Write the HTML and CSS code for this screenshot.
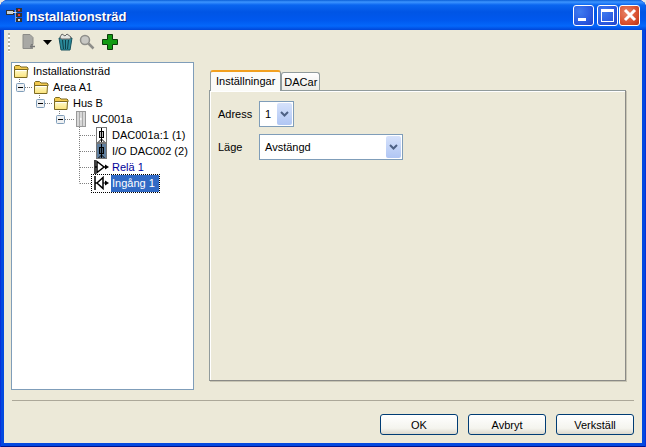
FILE: index.html
```html
<!DOCTYPE html>
<html lang="sv">
<head>
    <meta charset="UTF-8">
    <meta name="viewport" content="width=device-width, initial-scale=1.0">
    <title>Installationsträd</title>
    <link rel="stylesheet" href="styles.css">
</head>
<body>
    <svg class="defs" width="0" height="0">
        <defs>
            <linearGradient id="flap" x1="0" y1="0" x2="0" y2="1">
                <stop offset="0" stop-color="#fffbd0"/>
                <stop offset="1" stop-color="#fbe37a"/>
            </linearGradient>
        </defs>
        <symbol id="folder" viewBox="0 0 16 16">
            <path d="M1.500 13.500V3.500l1-1h4l1.500 1.500h6l1 1v2h-12z" fill="#f2c94e" stroke="#7c6a22"/>
            <path d="M1.500 14.500V6.500h13l-.5 8z" fill="url(#flap)" stroke="#7c6a22"/>
            <path d="M3 7.500h10.500" stroke="#fff" fill="none"/>
        </symbol>
        <symbol id="dac" viewBox="0 0 11 16">
            <path d="M5.500 1v3M5.500 10v2M5.500 12l-3 3M5.500 12l3 3M5.500 12v3" stroke="#000" fill="none"/>
            <rect x="3.500" y="4.500" width="4" height="6" fill="none" stroke="#000"/>
            <path d="M5.500 5v5" stroke="#000" stroke-width="1.500"/>
        </symbol>
        <symbol id="box" viewBox="0 0 9 9">
            <rect x="0.500" y="0.500" width="8" height="8" rx="1" fill="#eef0f2" stroke="#7f9db9"/>
            <path d="M2 4.500h5" stroke="#000"/>
        </symbol>
    </svg>

    <div class="window">
        <div class="titlebar">
            <svg class="title-icon" width="16" height="16" viewBox="0 0 16 16">
                <rect x="0.500" y="2.500" width="7" height="4" fill="#c8d0d8" stroke="#333"/>
                <path d="M7 4.500h3M10 2v12" stroke="#e8e8e8" fill="none"/>
                <rect x="10" y="0" width="6" height="4" fill="#333"/>
                <rect x="12" y="1" width="2" height="2" fill="#e33"/>
                <rect x="10" y="5" width="6" height="4" fill="#333"/>
                <rect x="12" y="6" width="2" height="2" fill="#e33"/>
                <rect x="10" y="10" width="6" height="4" fill="#333"/>
                <rect x="12" y="11" width="2" height="2" fill="#ddd"/>
            </svg>
            <span class="title-text">Installationsträd</span>
            <div class="title-buttons">
                <div class="tbtn tbtn-min"><span class="min-bar"></span></div>
                <div class="tbtn tbtn-max"><span class="max-box"></span></div>
                <div class="tbtn tbtn-close">
                    <svg width="14" height="14" viewBox="0 0 14 14"><path d="M2 2l10 10M12 2L2 12" stroke="#fff" stroke-width="3"/></svg>
                </div>
            </div>
        </div>

        <div class="content">
            <div class="toolbar">
                <div class="gripper"></div>
                <svg class="tool tool-doc" width="14" height="16" viewBox="0 0 14 16">
                    <path d="M1 .5h7l3 3v7H9v4H1z" fill="#a8a8a4" stroke="#8c8c88"/>
                    <path d="M10 10v5M8 12.500h5" stroke="#777" stroke-width="1.500"/>
                </svg>
                <svg class="tool tool-arrow" width="9" height="5" viewBox="0 0 9 5"><path d="M0 0h9L4.500 5z" fill="#000"/></svg>
                <svg class="tool tool-trash" width="15" height="18" viewBox="0 0 15 18">
                    <path d="M1 5h13l-2 12H3z" fill="#2a8a9a" stroke="#16505c"/>
                    <path d="M4.500 7l1 9M7.500 7v9M10.500 7l-1 9" stroke="#0f3f49"/>
                    <path d="M2 4l2-3 3 2 2-2 4 3-1 2H3z" fill="#e4e4e0" stroke="#666"/>
                </svg>
                <svg class="tool tool-lens" width="16" height="16" viewBox="0 0 16 16">
                    <circle cx="6" cy="6" r="4.500" fill="#c8c8c4" stroke="#8e8e8a" stroke-width="1.500"/>
                    <path d="M9.500 9.500l5 5" stroke="#8e8e8a" stroke-width="2.500"/>
                </svg>
                <svg class="tool tool-plus" width="16" height="16" viewBox="0 0 16 16">
                    <path d="M5.500.5h5v5h5v5h-5v5h-5v-5h-5v-5h5z" fill="#129a12" stroke="#0a3c0a"/>
                </svg>
            </div>

            <div class="main">
                <div class="tree">
                    <!-- dotted connector lines between the nodes -->
                    <svg class="tree-lines" width="100" height="130">
                        <path d="M7.500 16v4M13 24.500h8M27.500 32v4M33 40.500h8M47.500 48v4M53 56.500h10M67.500 64v56.500M68 72.500h16M68 88.500h16M68 104.500h14M68 120.500h12" stroke="#808080" stroke-dasharray="1 1" fill="none"/>
                    </svg>
                    <div class="node">
                        <svg class="node-icon" width="16" height="16"><use href="#folder"/></svg>
                        <span class="node-label">Installationsträd</span>
                    </div>
                    <div class="node level-1">
                        <svg class="expander" width="9" height="9"><use href="#box"/></svg>
                        <svg class="node-icon" width="16" height="16"><use href="#folder"/></svg>
                        <span class="node-label">Area A1</span>
                    </div>
                    <div class="node level-2">
                        <svg class="expander" width="9" height="9"><use href="#box"/></svg>
                        <svg class="node-icon" width="16" height="16"><use href="#folder"/></svg>
                        <span class="node-label">Hus B</span>
                    </div>
                    <div class="node level-3">
                        <svg class="expander expander-wide" width="9" height="9"><use href="#box"/></svg>
                        <svg class="node-icon unit" width="12" height="16" viewBox="0 0 12 16">
                            <rect x="1.500" y="0.500" width="9" height="15" fill="#d8d8d8" stroke="#999"/>
                            <path d="M4.500 1v14M7.500 1v14" stroke="#aaa"/>
                            <path d="M5 7l1.500 1L5 9" stroke="#fff" fill="none"/>
                        </svg>
                        <span class="node-label">UC001a</span>
                    </div>
                    <div class="node level-4">
                        <svg class="dac-icon" width="11" height="16"><rect x="0.500" y="0.500" width="10" height="15" fill="#fff" stroke="#777"/><use href="#dac"/></svg>
                        <span class="node-label">DAC001a:1 (1)</span>
                    </div>
                    <div class="node level-4">
                        <svg class="dac-icon" width="11" height="16"><rect x="0.500" y="0.500" width="10" height="15" fill="#5f7f9f" stroke="#777"/><use href="#dac"/></svg>
                        <span class="node-label">I/O DAC002 (2)</span>
                    </div>
                    <div class="node level-4">
                        <svg class="io-icon io-plain" width="15" height="14" viewBox="0 0 15 14">
                            <path d="M1 0v14M1 7h2M3 1.500L10 7l-7 5.500z" fill="#fff" stroke="#000" stroke-width="1.500"/>
                            <path d="M10 7h2" stroke="#000"/><path d="M11 4.500L15 7l-4 2.500z" fill="#000"/>
                        </svg>
                        <span class="node-label link">Relä 1</span>
                    </div>
                    <div class="node level-4">
                        <span class="focused">
                            <svg class="io-icon" width="15" height="14" viewBox="0 0 15 14">
                                <path d="M1 0v14M1 7h2M9 1.500L3 7l6 5.500z" fill="#fff" stroke="#000" stroke-width="1.500"/>
                                <path d="M9 7h2" stroke="#000"/><path d="M11 4.500L15 7l-4 2.500z" fill="#000"/>
                            </svg>
                            <span class="node-label selected">Ingång 1</span>
                        </span>
                    </div>
                </div>

                <div class="tabs">
                    <div class="tab-strip">
                        <div class="tab tab-active">Inställningar</div>
                        <div class="tab">DACar</div>
                    </div>
                    <div class="tab-page">
                        <div class="field">
                            <label class="field-label">Adress</label>
                            <div class="combo combo-small">
                                <span class="combo-value">1</span>
                                <span class="combo-arrow"><svg width="9" height="6" viewBox="0 0 9 6"><path d="M1 1l3.500 3.500L8 1" fill="none" stroke="#4d6185" stroke-width="2"/></svg></span>
                            </div>
                        </div>
                        <div class="field">
                            <label class="field-label">Läge</label>
                            <div class="combo combo-wide">
                                <span class="combo-value">Avstängd</span>
                                <span class="combo-arrow"><svg width="9" height="6" viewBox="0 0 9 6"><path d="M1 1l3.500 3.500L8 1" fill="none" stroke="#4d6185" stroke-width="2"/></svg></span>
                            </div>
                        </div>
                    </div>
                </div>
            </div>

            <div class="separator"></div>

            <div class="actions">
                <button class="btn" type="button">OK</button>
                <button class="btn" type="button">Avbryt</button>
                <button class="btn" type="button">Verkställ</button>
            </div>
        </div>
    </div>
</body>
</html>
```

FILE: styles.css
```css
html, body {
    margin: 0;
    padding: 0;
    background: #e8e8e4;
}

body {
    width: 646px;
    height: 447px;
    overflow: hidden;
    font-family: "Liberation Sans", Arial, sans-serif;
    font-size: 11px;
    color: #000;
}

.defs {
    position: absolute;
}

.window {
    width: 646px;
    height: 447px;
    box-sizing: border-box;
    display: flex;
    flex-direction: column;
    border-radius: 8px 8px 0 0;
    background: #0349e0;
    box-shadow: inset 1px 0 #0831d9, inset -1px 0 #0831d9, inset 0 -1px #00138c;
    overflow: hidden;
}

/* title bar */
.titlebar {
    height: 30px;
    flex: none;
    box-sizing: border-box;
    display: flex;
    align-items: center;
    padding: 2px 6px 0 6px;
    background: linear-gradient(to bottom, #0a5fd8 0, #3d95ff 2px, #0a66f0 5px, #0055e5 12px, #0058ee 20px, #0467fb 26px, #0046d8 30px);
}

.title-icon {
    flex: none;
    margin-right: 4px;
}

.title-text {
    flex: 1;
    color: #fff;
    font-size: 13px;
    font-weight: 700;
    text-shadow: 1px 1px 0 #0a2a8a;
}

.title-buttons {
    display: flex;
    align-items: center;
    margin-top: -2px;
}

.tbtn {
    width: 21px;
    height: 21px;
    box-sizing: border-box;
    border: 1px solid #fff;
    border-radius: 3px;
    display: flex;
    align-items: center;
    justify-content: center;
    position: relative;
    background: radial-gradient(circle at 30% 30%, #3f7bf0, #2a5ae0 60%, #2140c8);
}

.tbtn-min {
    margin-right: 3px;
}

.tbtn-max {
    margin-right: 1px;
}

.tbtn-close {
    background: radial-gradient(circle at 35% 35%, #e8866a, #d9502f 60%, #b83214);
}

.min-bar {
    position: absolute;
    left: 4px;
    bottom: 4px;
    width: 8px;
    height: 3px;
    background: #fff;
}

.max-box {
    width: 11px;
    height: 9px;
    border: 1px solid #fff;
    border-top-width: 3px;
}

/* dialog body */
.content {
    flex: 1;
    margin: 0 4px 4px 4px;
    background: #ece9d8;
    display: flex;
    flex-direction: column;
    min-height: 0;
}

.toolbar {
    height: 24px;
    flex: none;
    box-sizing: border-box;
    display: flex;
    align-items: center;
    padding-left: 4px;
}

.gripper {
    width: 2px;
    height: 19px;
    margin-right: 12px;
    background: repeating-linear-gradient(to bottom, #b8b4a0 0, #b8b4a0 2px, #fff 2px, #fff 4px);
}

.tool {
    flex: none;
}

.tool-doc {
    margin-right: 7px;
}

.tool-arrow {
    margin-right: 6px;
}

.tool-trash {
    margin-right: 6px;
}

.tool-lens {
    margin-right: 7px;
}

.main {
    height: 328px;
    flex: none;
    display: flex;
    align-items: flex-start;
    margin-top: 8px;
    padding-left: 7px;
}

/* tree on the left */
.tree {
    width: 183px;
    height: 328px;
    box-sizing: border-box;
    flex: none;
    position: relative;
    background: #fff;
    border: 1px solid #7f9db9;
}

.tree-lines {
    position: absolute;
    left: 0;
    top: 0;
}

.node {
    height: 16px;
    display: flex;
    align-items: center;
    position: relative;
    padding-left: 1px;
    white-space: nowrap;
}

.level-1 {
    padding-left: 4px;
}

.level-2 {
    padding-left: 24px;
}

.level-3 {
    padding-left: 44px;
}

.level-4 {
    padding-left: 84px;
}

.expander {
    flex: none;
    margin-right: 8px;
}

.expander-wide {
    margin-right: 10px;
}

.node-icon {
    flex: none;
    margin-right: 4px;
}

.unit {
    margin-right: 5px;
}

.dac-icon {
    flex: none;
    margin-right: 5px;
}

.io-icon {
    flex: none;
    margin-right: 2px;
}

.io-plain {
    margin-left: -2px;
    margin-right: 3px;
}

.link {
    color: #000099;
}

.focused {
    display: flex;
    align-items: center;
    height: 17px;
    margin-left: -4px;
    padding-left: 2px;
    outline: 1px dotted #000;
}

.selected {
    background: #316ac5;
    color: #fff;
    height: 17px;
    line-height: 17px;
    padding: 0 4px 0 1px;
}

/* tab control */
.tabs {
    flex: none;
    width: 417px;
    margin-left: 15px;
    display: flex;
    flex-direction: column;
    margin-top: 8px;
}

.tab-strip {
    height: 20px;
    display: flex;
    align-items: flex-end;
    position: relative;
    z-index: 1;
    padding-left: 1px;
}

.tab {
    height: 18px;
    box-sizing: border-box;
    padding: 0 2px;
    line-height: 18px;
    border: 1px solid #919b9c;
    border-bottom: none;
    border-radius: 3px 3px 0 0;
    background: linear-gradient(to bottom, #fff, #ecebe6);
}

.tab-active {
    height: 21px;
    margin-bottom: -1px;
    line-height: 19px;
    padding: 0 5px;
    border-top: 2px solid #f2a01e;
    background: #fbfbf8;
}

.tab-page {
    height: 291px;
    box-sizing: border-box;
    padding: 10px 8px;
    border: 1px solid #919b9c;
    border-right-color: #8a8a86;
    border-bottom-color: #8a8a86;
    box-shadow: inset 1px 1px 0 #fff, 1px 1px 0 #c8c5b4;
    background: #ece9d8;
}

.field {
    display: flex;
    align-items: center;
    margin-bottom: 7px;
}

.field-label {
    width: 41px;
    flex: none;
}

.combo {
    height: 26px;
    box-sizing: border-box;
    display: flex;
    align-items: center;
    justify-content: space-between;
    padding: 1px;
    background: #fff;
    border: 1px solid #7f9db9;
}

.combo-small {
    width: 35px;
}

.combo-wide {
    width: 144px;
}

.combo-value {
    padding-left: 4px;
}

.combo-arrow {
    width: 15px;
    height: 100%;
    display: flex;
    align-items: center;
    justify-content: center;
    border-radius: 2px;
    background: linear-gradient(to bottom, #d6e2fb, #b0c6f4);
}

/* bottom buttons */
.separator {
    height: 1px;
    flex: none;
    margin: 10px 8px 0 8px;
    background: #aca899;
}

.actions {
    flex: 1;
    display: flex;
    justify-content: flex-end;
    gap: 10px;
    padding: 13px 8px 0 0;
}

.btn {
    width: 78px;
    height: 21px;
    box-sizing: border-box;
    padding: 0;
    font-family: inherit;
    font-size: 11px;
    color: #000;
    border: 1px solid #003c74;
    border-radius: 3px;
    background: linear-gradient(to bottom, #fff, #f4f4ee 70%, #dcd8cc);
}
```
